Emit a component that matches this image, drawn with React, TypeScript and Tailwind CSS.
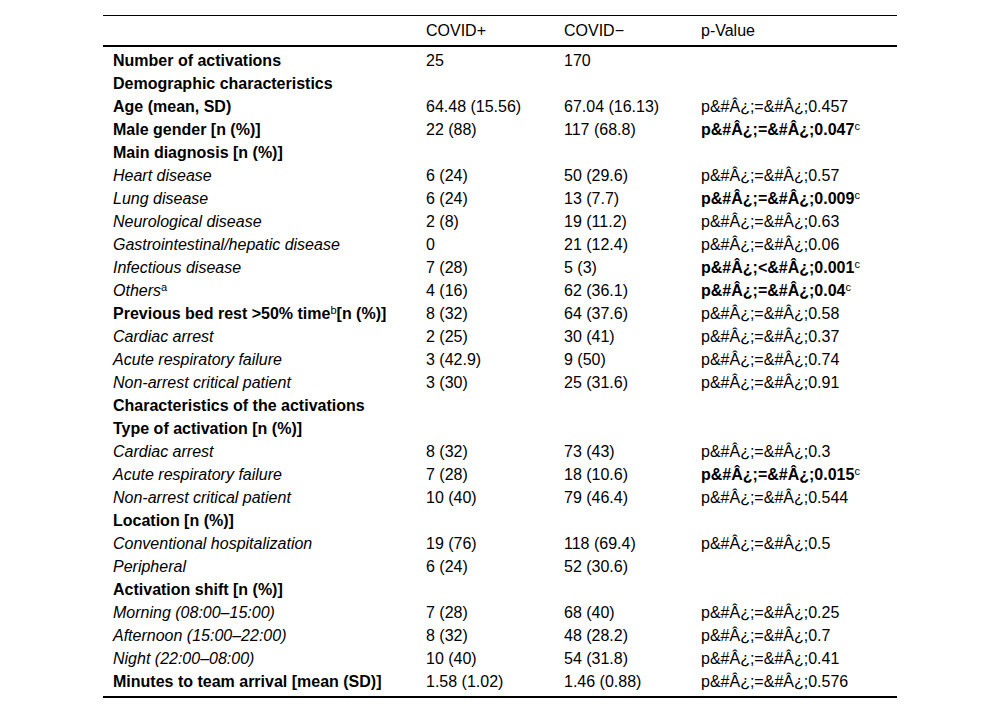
import React from "react";

type Row = {
  label: React.ReactNode;
  kind: "b" | "i";
  a?: string;
  b?: string;
  p?: string;
  pb?: boolean;
};

const P = (s: string) => `p&#Â¿;=&#Â¿;${s}`;

const Sup = ({ children }: { children: React.ReactNode }) => (
  <span className="relative -top-[5px] text-[11px] leading-none font-normal not-italic">{children}</span>
);

const rows: Row[] = [
  { label: "Number of activations", kind: "b", a: "25", b: "170" },
  { label: "Demographic characteristics", kind: "b" },
  { label: "Age (mean, SD)", kind: "b", a: "64.48 (15.56)", b: "67.04 (16.13)", p: P("0.457") },
  { label: "Male gender [n (%)]", kind: "b", a: "22 (88)", b: "117 (68.8)", p: P("0.047"), pb: true },
  { label: "Main diagnosis [n (%)]", kind: "b" },
  { label: "Heart disease", kind: "i", a: "6 (24)", b: "50 (29.6)", p: P("0.57") },
  { label: "Lung disease", kind: "i", a: "6 (24)", b: "13 (7.7)", p: P("0.009"), pb: true },
  { label: "Neurological disease", kind: "i", a: "2 (8)", b: "19 (11.2)", p: P("0.63") },
  { label: "Gastrointestinal/hepatic disease", kind: "i", a: "0", b: "21 (12.4)", p: P("0.06") },
  { label: "Infectious disease", kind: "i", a: "7 (28)", b: "5 (3)", p: "p&#Â¿;<&#Â¿;0.001", pb: true },
  {
    label: (
      <>
        Others<Sup>a</Sup>
      </>
    ),
    kind: "i",
    a: "4 (16)",
    b: "62 (36.1)",
    p: P("0.04"),
    pb: true,
  },
  {
    label: (
      <>
        Previous bed rest &gt;50% time<Sup>b</Sup>[n (%)]
      </>
    ),
    kind: "b",
    a: "8 (32)",
    b: "64 (37.6)",
    p: P("0.58"),
  },
  { label: "Cardiac arrest", kind: "i", a: "2 (25)", b: "30 (41)", p: P("0.37") },
  { label: "Acute respiratory failure", kind: "i", a: "3 (42.9)", b: "9 (50)", p: P("0.74") },
  { label: "Non-arrest critical patient", kind: "i", a: "3 (30)", b: "25 (31.6)", p: P("0.91") },
  { label: "Characteristics of the activations", kind: "b" },
  { label: "Type of activation [n (%)]", kind: "b" },
  { label: "Cardiac arrest", kind: "i", a: "8 (32)", b: "73 (43)", p: P("0.3") },
  { label: "Acute respiratory failure", kind: "i", a: "7 (28)", b: "18 (10.6)", p: P("0.015"), pb: true },
  { label: "Non-arrest critical patient", kind: "i", a: "10 (40)", b: "79 (46.4)", p: P("0.544") },
  { label: "Location [n (%)]", kind: "b" },
  { label: "Conventional hospitalization", kind: "i", a: "19 (76)", b: "118 (69.4)", p: P("0.5") },
  { label: "Peripheral", kind: "i", a: "6 (24)", b: "52 (30.6)" },
  { label: "Activation shift [n (%)]", kind: "b" },
  { label: "Morning (08:00–15:00)", kind: "i", a: "7 (28)", b: "68 (40)", p: P("0.25") },
  { label: "Afternoon (15:00–22:00)", kind: "i", a: "8 (32)", b: "48 (28.2)", p: P("0.7") },
  { label: "Night (22:00–08:00)", kind: "i", a: "10 (40)", b: "54 (31.8)", p: P("0.41") },
  { label: "Minutes to team arrival [mean (SD)]", kind: "b", a: "1.58 (1.02)", b: "1.46 (0.88)", p: P("0.576") },
];

export default function App() {
  return (
    <div className="w-[1000px] h-[714px] bg-white text-black font-['Liberation_Sans',Arial,sans-serif] text-[16px] leading-[18px]">
      <div className="w-[794px] ml-[103px] pt-[15px]">
        <div className="border-t border-black">
          <div className="grid grid-cols-[313px_138px_137px_206px] h-[31px] pt-[1px] items-center border-b-2 border-black">
            <div></div>
            <div className="pl-[10px]">COVID+</div>
            <div className="pl-[10px]">COVID−</div>
            <div className="pl-[10px]">p-Value</div>
          </div>
          <div className="pt-[2px] pb-[3px] border-b-2 border-black">
            {rows.map((r, i) => (
              <div key={i} className="grid grid-cols-[313px_138px_137px_206px] h-[23px] items-center">
                <div className={"pl-[10px] whitespace-nowrap " + (r.kind === "b" ? "font-bold" : "italic")}>{r.label}</div>
                <div className="pl-[10px]">{r.a}</div>
                <div className="pl-[10px]">{r.b}</div>
                <div className="pl-[10px] whitespace-nowrap">
                  {r.p && (
                    <>
                      <span className={r.pb ? "font-bold" : ""}>{r.p}</span>
                      {r.pb && <Sup>c</Sup>}
                    </>
                  )}
                </div>
              </div>
            ))}
          </div>
        </div>
      </div>
    </div>
  );
}
